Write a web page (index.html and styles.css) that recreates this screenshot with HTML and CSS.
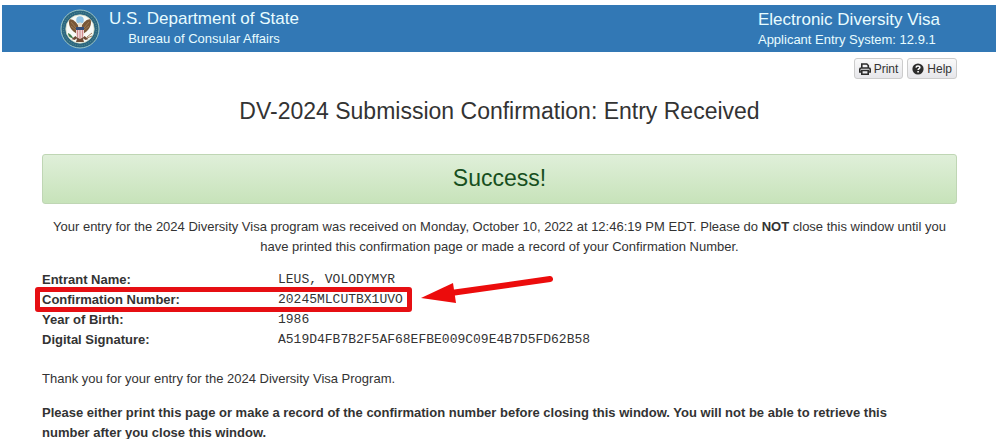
FILE: index.html
```html
<!DOCTYPE html>
<html lang="en">
<head>
<meta charset="utf-8">
<meta name="viewport" content="width=device-width, initial-scale=1">
<title>DV-2024 Submission Confirmation</title>
<link rel="stylesheet" href="styles.css">
</head>
<body>
<header class="banner">
  <div class="brand">
    <svg class="seal" viewBox="0 0 40 40" aria-hidden="true">
      <circle cx="20" cy="20" r="19" fill="#2b6680" stroke="#9fc8c8" stroke-width="1"/>
      <circle cx="20" cy="20" r="16.5" fill="none" stroke="#4f8790" stroke-width="1.2" stroke-dasharray="1 1.3"/>
      <circle cx="20" cy="20" r="14.2" fill="#f8faf6" stroke="#c9d3bd" stroke-width=".8"/>
      <circle cx="20" cy="11" r="3.8" fill="#8fc3e4"/>
      <path d="M18.500 17C16 12.500 12 9.500 9.500 10.500c-1.500 4 .5 9 4 12l3.500 2.500zM21.500 17c2.500-4.500 6.500-7.500 9-6.500 1.500 4-.5 9-4 12L23 25z" fill="#795737"/>
      <path d="M11 13l5 6M11 17l5 4M29 13l-5 6M29 17l-5 4" stroke="#a9875f" stroke-width=".7"/>
      <path d="M18 14.500c1-1.500 3.500-1.300 4 .2l-.5 3.300h-3z" fill="#e9e2cf"/>
      <path d="M15.500 27l-4 3 3 1 3-2zM24.500 27l4 3-3 1-3-2zM17.500 28h5l1.500 5h-8z" fill="#6f4c36"/>
      <path d="M16 18h8v6.500c0 3-2 4.500-4 5.500-2-1-4-2.500-4-5.500z" fill="#eed3d1"/>
      <path d="M17.500 21v7M20 21v9M22.500 21v7" stroke="#d08a8e" stroke-width="1"/>
      <path d="M16 18h8v3h-8z" fill="#354d78"/>
      <path d="M8 24c0 3 2 5 5 5-1-2-2-4-5-5z" fill="#3e7a4b"/>
      <path d="M27 28l5-4M27 29l5-2" stroke="#a0805f" stroke-width="1"/>
    </svg>
    <div class="brand-text">
      <div class="banner-title">U.S. Department of State</div>
      <div class="banner-subtitle">Bureau of Consular Affairs</div>
    </div>
  </div>
  <div class="system">
    <div class="banner-title">Electronic Diversity Visa</div>
    <div class="banner-subtitle">Applicant Entry System: 12.9.1</div>
  </div>
</header>
<main class="content">
  <div class="toolbar">
    <button class="btn" type="button">
      <svg class="icon" viewBox="0 0 12 12" aria-hidden="true">
        <path d="M2.800 5V1h5l1.500 1.500V5M2.500 9H.8V6.300Q.8 5 2 5h8q1.200 0 1.200 1.300V9H9.500M2.800 7.500h6.400v3.700H2.800z" fill="none" stroke="#2d2d2d" stroke-width="1.600"/>
      </svg>Print
    </button>
    <button class="btn" type="button">
      <svg class="icon" viewBox="0 0 12 12" aria-hidden="true">
        <circle cx="6" cy="6" r="5.600" fill="#2d2d2d"/>
        <path d="M4 4.600C4.200 2.300 8 2.400 7.900 4.600 7.800 5.700 6.100 5.700 6.100 7.100" fill="none" stroke="#fff" stroke-width="1.500"/>
        <path d="M5.300 8h1.600v1.500H5.300z" fill="#fff"/>
      </svg>Help
    </button>
  </div>
  <h1 class="heading">DV-2024 Submission Confirmation: Entry Received</h1>
  <div class="alert" role="status">Success!</div>
  <p class="intro">Your entry for the 2024 Diversity Visa program was received on Monday, October 10, 2022 at 12:46:19 PM EDT. Please do <strong>NOT</strong> close this window until you have printed this confirmation page or made a record of your Confirmation Number.</p>
  <div class="details">
    <table class="entry">
      <tbody>
        <tr><th scope="row">Entrant Name:</th><td>LEUS, VOLODYMYR</td></tr>
        <tr><th scope="row">Confirmation Number:</th><td>20245MLCUTBX1UVO</td></tr>
        <tr><th scope="row">Year of Birth:</th><td>1986</td></tr>
        <tr><th scope="row">Digital Signature:</th><td>A519D4FB7B2F5AF68EFBE009C09E4B7D5FD62B58</td></tr>
      </tbody>
    </table>
    <div class="highlight"></div>
    <svg class="arrow" viewBox="0 0 132 30" aria-hidden="true">
      <path d="M30 18L129 4" stroke="#ec0c0c" stroke-width="6" stroke-linecap="round"/>
      <path d="M0 23L32 8l3 20z" fill="#ec0c0c"/>
    </svg>
  </div>
  <p class="thanks">Thank you for your entry for the 2024 Diversity Visa Program.</p>
  <p class="notice">Please either print this page or make a record of the confirmation number before closing this window. You will not be able to retrieve this number after you close this window.</p>
</main>
</body>
</html>
```
FILE: styles.css
```css
body {
  margin: 0;
  padding: 5px 4px 0 2px;
  background: #fff;
  color: #333;
  font: 13px/20px "Liberation Sans", Arial, sans-serif;
}

.banner {
  display: flex;
  justify-content: space-between;
  align-items: center;
  box-sizing: border-box;
  min-height: 47px;
  padding: 0 56px 0 58px;
  background: #3278b5;
  color: #e8fcff;
}

.brand {
  display: flex;
  align-items: center;
  gap: 9px;
}

.seal {
  width: 40px;
  height: 40px;
}

.brand-text {
  text-align: center;
}

.system {
  padding-top: 2px;
}

.banner-title {
  font-size: 17px;
  line-height: 20px;
}

.banner-subtitle {
  font-size: 13px;
  line-height: 19px;
}

.content {
  padding: 6px 39px 0 40px;
}

.toolbar {
  display: flex;
  justify-content: flex-end;
  gap: 4px;
}

.btn {
  display: flex;
  align-items: center;
  gap: 3px;
  height: 21px;
  padding: 0 4px;
  border: 1px solid #ccc;
  border-radius: 3px;
  background: linear-gradient(#fafafa, #e6e6ea);
  color: #333;
  font: 12px/18px "Liberation Sans", Arial, sans-serif;
}

.icon {
  width: 12px;
  height: 12px;
}

.heading {
  margin: 17px 0 28px;
  font-size: 23px;
  font-weight: 400;
  line-height: 30px;
  text-align: center;
}

.alert {
  padding: 8px 16px 10px;
  border: 1px solid #bfd6b4;
  border-radius: 3px;
  background: linear-gradient(#dfefd9, #c7e3ba);
  color: #174f20;
  font-size: 23px;
  line-height: 30px;
  text-align: center;
}

.intro {
  margin: 13px 0;
  text-align: center;
}

.details {
  position: relative;
}

.entry {
  border-collapse: collapse;
}

.entry th,
.entry td {
  padding: 0;
  line-height: 20px;
  text-align: left;
}

.entry th {
  width: 236px;
}

.entry td {
  font-family: "Liberation Mono", monospace;
}

.highlight {
  position: absolute;
  top: 17px;
  left: -7px;
  box-sizing: border-box;
  width: 377px;
  height: 25px;
  border: 5px solid #e60f13;
  border-radius: 3px;
}

.arrow {
  position: absolute;
  top: 5px;
  left: 379px;
  width: 132px;
  height: 30px;
}

.thanks {
  margin: 19px 0 14px;
}

.notice {
  margin: 0;
  padding-right: 32px;
  font-weight: 700;
}
```
